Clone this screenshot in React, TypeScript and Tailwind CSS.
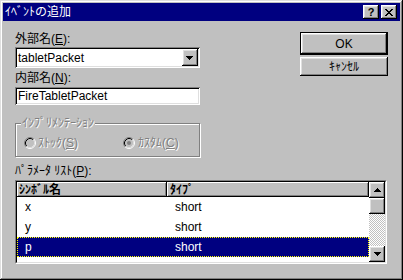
import React from 'react';

const font = "font-['Liberation_Sans','Noto_Sans_CJK_JP',sans-serif] text-[12px] leading-[14px]";
const raised = 'shadow-[inset_-1px_-1px_#000,inset_1px_1px_#fff,inset_-2px_-2px_#808080,inset_2px_2px_#dfdfdf]';
const sunken = 'shadow-[inset_1px_1px_#808080,inset_-1px_-1px_#fff,inset_2px_2px_#000,inset_-2px_-2px_#dfdfdf]';

const Arrow = ({ up = false }: { up?: boolean }) => (
  <svg width="7" height="4" viewBox="0 0 7 4" className={up ? 'rotate-180' : ''}>
    <path d="M0 0h7v1H0zM1 1h5v1H1zM2 2h3v1H2zM3 3h1v1H3z" fill="#000" />
  </svg>
);

const Radio = ({ checked = false }: { checked?: boolean }) => (
  <svg width="12" height="12" viewBox="0 0 12 12">
    <circle cx="6" cy="6" r="4" fill="#c0c0c0" />
    <path d="M2.11 9.89A5.5 5.5 0 0 1 9.89 2.11" stroke="#808080" fill="none" />
    <path d="M9.89 2.11A5.5 5.5 0 0 1 2.11 9.89" stroke="#fff" fill="none" />
    <path d="M2.82 9.18A4.5 4.5 0 0 1 9.18 2.82" stroke="#000" fill="none" />
    <path d="M9.18 2.82A4.5 4.5 0 0 1 2.82 9.18" stroke="#dfdfdf" fill="none" />
    {checked && <circle cx="6" cy="6" r="2" fill="#808080" />}
  </svg>
);

const rows = [
  { name: 'x', type: 'short' },
  { name: 'y', type: 'short' },
  { name: 'p', type: 'short' },
];

export default function App() {
  return (
    <div className={`${font} w-[403px] h-[280px] bg-[#c0c0c0] p-[3px] flex flex-col text-black shadow-[inset_-1px_-1px_#000,inset_1px_1px_#dfdfdf,inset_-2px_-2px_#808080,inset_2px_2px_#fff]`}>
      {/* title bar */}
      <div className="h-[18px] bg-[#000080] flex items-center pl-[2px] pr-[3px] text-white">
        <span>ｲﾍﾞﾝﾄの追加</span>
        <div className="ml-auto flex gap-[2px]">
          <div className={`w-[16px] h-[14px] bg-[#c0c0c0] ${raised} flex items-center justify-center text-black font-bold text-[11px] leading-[11px]`}>
            ?
          </div>
          <div className={`w-[16px] h-[14px] bg-[#c0c0c0] ${raised} flex items-center justify-center`}>
            <svg width="8" height="7" viewBox="0 0 8 7">
              <path d="M0 0h2v1H0zM6 0h2v1H6zM1 1h2v1H1zM5 1h2v1H5zM2 2h4v1H2zM3 3h2v1H3zM2 4h4v1H2zM1 5h2v1H1zM5 5h2v1H5zM0 6h2v1H0zM6 6h2v1H6z" fill="#000" />
            </svg>
          </div>
        </div>
      </div>

      <div className="flex-1 flex flex-col px-[12px]">
        <div className="flex">
          <div className="w-[187px] pt-[11px] flex flex-col">
            <div className="h-[14px]">外部名(<u>E</u>):</div>
            <div className={`mt-[1px] h-[21px] bg-white ${sunken} flex items-center pl-[3px] pr-[2px]`}>
              <span className="flex-1">tabletPacket</span>
              <div className={`w-[16px] h-[17px] bg-[#c0c0c0] ${raised} flex items-center justify-center`}>
                <Arrow />
              </div>
            </div>
            <div className="mt-[3px] h-[14px]">内部名(<u>N</u>):</div>
            <div className={`mt-[2px] h-[18px] bg-white ${sunken} flex items-center pl-[3px]`}>
              FireTabletPacket
            </div>

            <div className="relative mt-[18px] h-[34px] border border-[#808080] shadow-[inset_1px_1px_#fff,1px_1px_#fff]">
              <span className="absolute -top-[8px] left-[5px] px-[1px] bg-[#c0c0c0] text-[#808080] [text-shadow:1px_1px_#fff]">
                ｲﾝﾌﾟﾘﾒﾝﾃｰｼｮﾝ
              </span>
              <div className="flex items-center pt-[12px] pl-[8px] text-[#808080] [text-shadow:1px_1px_#fff]">
                <Radio />
                <span className="ml-[2px]">ｽﾄｯｸ(<u>S</u>)</span>
                <div className="ml-[45px] flex items-center">
                  <Radio checked />
                  <span className="ml-[3px]">ｶｽﾀﾑ(<u>C</u>)</span>
                </div>
              </div>
            </div>
          </div>

          <div className="ml-[100px] w-[89px] pt-[11px] flex flex-col">
            <div className="h-[23px] border border-black">
              <div className={`h-full bg-[#c0c0c0] ${raised} flex items-center justify-center`}>OK</div>
            </div>
            <div className={`mt-[2px] h-[19px] bg-[#c0c0c0] ${raised} flex items-center justify-center`}>ｷｬﾝｾﾙ</div>
          </div>
        </div>

        <div className="mt-[7px] h-[14px]">ﾊﾟﾗﾒｰﾀ ﾘｽﾄ(<u>P</u>):</div>
        <div className="mt-[2px] w-[372px] h-[84px] border-t border-l border-[#808080] border-b-white border-r-white border-b border-r">
          <div className="h-full border-t border-l border-black border-b-[#dfdfdf] border-r-[#dfdfdf] border-b border-r flex bg-white">
            <div className="flex-1 flex flex-col">
              <div className="h-[15px] flex font-bold bg-[#c0c0c0]">
                <div className="w-[150px] pl-[2px] shadow-[inset_-1px_-1px_#000,inset_1px_1px_#fff,inset_-2px_-2px_#808080] flex items-center">
                  ｼﾝﾎﾞﾙ名
                </div>
                <div className="flex-1 pl-[3px] shadow-[inset_-1px_-1px_#000,inset_1px_1px_#fff,inset_-2px_-2px_#808080] flex items-center">
                  ﾀｲﾌﾟ
                </div>
              </div>
              {rows.map((r) => {
                const sel = r.name === 'p';
                return (
                  <div
                    key={r.name}
                    className={`h-[20px] flex items-center ${sel ? 'bg-[#000080] text-white outline-1 outline-dotted outline-[#ffff00] -outline-offset-1' : ''}`}
                  >
                    <div className="w-[150px] pl-[8px]">{r.name}</div>
                    <div className="flex-1 pl-[8px]">{r.type}</div>
                  </div>
                );
              })}
            </div>
            <div className="w-[16px] flex flex-col">
              <div className={`h-[16px] bg-[#c0c0c0] ${raised} flex items-center justify-center`}>
                <Arrow up />
              </div>
              <div className={`h-[16px] bg-[#c0c0c0] ${raised}`} />
              <div className="flex-1 bg-[repeating-conic-gradient(#c0c0c0_0_25%,#fff_0_50%)] bg-[length:2px_2px]" />
              <div className={`h-[16px] bg-[#c0c0c0] ${raised} flex items-center justify-center`}>
                <Arrow />
              </div>
            </div>
          </div>
        </div>
      </div>
    </div>
  );
}
